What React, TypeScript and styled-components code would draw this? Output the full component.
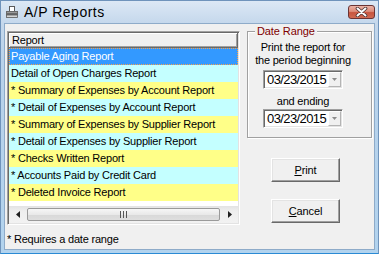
import React from "react";
import styled, { createGlobalStyle } from "styled-components";

const GlobalStyle = createGlobalStyle`
  html, body { margin: 0; padding: 0; background: #ffffff; }
  body { font-family: "Liberation Sans", Arial, sans-serif; color: #000; }
  * { box-sizing: border-box; }
`;

const Window = styled.div`
  width: 379px;
  height: 254px;
  display: flex;
  flex-direction: column;
  padding: 0 3px 3px;
  border: 1px solid #6f93bb;
  border-bottom-color: #2a8ad4;
  background: linear-gradient(to bottom, #dce8f5 0px, #c5d8ec 22px, #b9d2ea 60px, #b2d3ee 100%);
`;

const TitleBar = styled.div`
  height: 22px;
  flex: none;
  display: flex;
  align-items: center;
  padding-left: 2px;
`;

const TitleIcon = styled.svg`
  width: 12px;
  height: 12px;
  flex: none;
`;

const TitleText = styled.span`
  margin-left: 6px;
  flex: 1;
  font-size: 14px;
  letter-spacing: 0.5px;
  color: #000;
`;

const CloseButton = styled.div`
  align-self: flex-start;
  margin-top: 4px;
  width: 27px;
  height: 14px;
  border: 1px solid #6b3434;
  border-radius: 3px;
  background: linear-gradient(to bottom, #ebb3a6 0%, #dd8c7a 45%, #c8553f 55%, #d06a52 100%);
  display: flex;
  align-items: center;
  justify-content: center;
`;

const Client = styled.div`
  flex: 1;
  display: flex;
  gap: 7px;
  padding-left: 2px;
  background: #f0f0f0;
  border: 1px solid #8eabc9;
`;

const LeftColumn = styled.div`
  width: 233px;
  padding-top: 7px;
  display: flex;
  flex-direction: column;
`;

const RightColumn = styled.div`
  width: 125px;
  padding-top: 1px;
  display: flex;
  flex-direction: column;
`;

const ListBox = styled.div`
  height: 194px;
  display: flex;
  flex-direction: column;
  padding: 1px;
  border: 1px solid;
  border-color: #a0a0a0 #ffffff #ffffff #a0a0a0;
  box-shadow: inset 1px 1px 0 #696969, inset -1px -1px 0 #e3e3e3;
  background: #ffffff;
  font-size: 11px;
  letter-spacing: -0.2px;
`;

const Header = styled.div`
  height: 15px;
  flex: none;
  line-height: 14px;
  padding-left: 3px;
  background: #f0f0f0;
  border-right: 1px solid #696969;
  border-bottom: 1px solid #696969;
  box-shadow: inset 1px 1px 0 #ffffff, inset -1px -1px 0 #a0a0a0;
`;

const Rows = styled.div`
  flex: 1;
  background: #ffffff;
`;

const Row = styled.div<{ $tone: "cyan" | "yellow"; $selected?: boolean }>`
  height: 17px;
  line-height: 17px;
  padding-left: 2px;
  white-space: nowrap;
  overflow: hidden;
  background: ${(p) => (p.$selected ? "#3399ff" : p.$tone === "cyan" ? "#c4ffff" : "#ffff88")};
  color: ${(p) => (p.$selected ? "#ffffff" : "#000000")};
  outline: ${(p) => (p.$selected ? "1px dotted #f7a24a" : "none")};
  outline-offset: -1px;
`;

const ScrollBar = styled.div`
  height: 17px;
  flex: none;
  display: flex;
  background: linear-gradient(to bottom, #e3e3e3, #eeeeee 30%, #f2f2f2);
`;

const ScrollArrow = styled.div`
  width: 17px;
  flex: none;
  display: flex;
  align-items: center;
  justify-content: center;
`;

const ScrollThumb = styled.div`
  flex: 1;
  height: 13px;
  margin: 2px 1px 0;
  border: 1px solid #9a9a9a;
  border-radius: 2px;
  background: linear-gradient(to bottom, #f6f6f6, #e9e9e9 50%, #d8d8d8 51%, #dedede);
  display: flex;
  align-items: center;
  justify-content: center;
`;

const Note = styled.div`
  margin-top: 8px;
  font-size: 11px;
  line-height: 13px;
  letter-spacing: -0.2px;
`;

const GroupBox = styled.fieldset`
  margin: 0;
  padding: 0;
  min-width: 0;
  border: 1px solid #a0a0a0;
  box-shadow: inset 1px 1px 0 #ffffff, 1px 1px 0 #ffffff;
`;

const Legend = styled.legend`
  margin-left: 7px;
  padding: 0 2px;
  background: #f0f0f0;
  color: #800000;
  font-size: 11px;
  line-height: 13px;
  letter-spacing: -0.1px;
`;

const GroupContent = styled.div`
  display: flex;
  flex-direction: column;
  align-items: center;
  padding: 3px 23px 9px 10px;
  font-size: 11px;
  letter-spacing: -0.2px;
`;

const Caption = styled.div<{ $gap?: number }>`
  line-height: 13px;
  text-align: center;
  white-space: nowrap;
  margin-top: ${(p) => p.$gap ?? 0}px;
`;

const DateField = styled.div<{ $gap: number }>`
  width: 80px;
  height: 19px;
  margin-top: ${(p) => p.$gap}px;
  display: flex;
  align-items: stretch;
  padding: 1px;
  background: #ffffff;
  border: 1px solid;
  border-color: #a0a0a0 #ffffff #ffffff #a0a0a0;
  box-shadow: inset 1px 1px 0 #696969, inset -1px -1px 0 #e3e3e3;
`;

const DateText = styled.span`
  flex: 1;
  padding-left: 2px;
  font-size: 13px;
  line-height: 15px;
  letter-spacing: -0.6px;
`;

const DropButton = styled.div`
  width: 13px;
  flex: none;
  display: flex;
  align-items: center;
  justify-content: center;
  background: #f0f0f0;
  border: 1px solid;
  border-color: #ffffff #b4b4b4 #b4b4b4 #ffffff;
`;

const Button = styled.div<{ $gap: number }>`
  width: 69px;
  height: 24px;
  margin: ${(p) => p.$gap}px 0 0 24px;
  display: flex;
  align-items: center;
  justify-content: center;
  background: #f0f0f0;
  border: 1px solid;
  border-color: #ffffff #696969 #696969 #ffffff;
  box-shadow: inset -1px -1px 0 #a0a0a0, inset 1px 1px 0 #e3e3e3;
  font-size: 11px;
  letter-spacing: -0.1px;
  u { text-decoration: underline; text-underline-offset: 1px; }
`;

const reports: { label: string; tone: "cyan" | "yellow" }[] = [
  { label: "Payable Aging Report", tone: "cyan" },
  { label: "Detail of Open Charges Report", tone: "cyan" },
  { label: "* Summary of Expenses by Account Report", tone: "yellow" },
  { label: "* Detail of Expenses by Account Report", tone: "cyan" },
  { label: "* Summary of Expenses by Supplier Report", tone: "yellow" },
  { label: "* Detail of Expenses by Supplier Report", tone: "cyan" },
  { label: "* Checks Written Report", tone: "yellow" },
  { label: "* Accounts Paid by Credit Card", tone: "cyan" },
  { label: "* Deleted Invoice Report", tone: "yellow" },
];

const DropArrow = () => (
  <svg width="5" height="3" viewBox="0 0 5 3">
    <path d="M0 0 H5 L2.5 3 Z" fill="#8c8c8c" />
  </svg>
);

export default function App() {
  return (
    <>
      <GlobalStyle />
      <Window>
        <TitleBar>
          <TitleIcon viewBox="0 0 12 12">
            <rect x="3.5" y="0.5" width="5" height="5" fill="#ffffff" stroke="#5a5a5a" />
            <rect x="0" y="5" width="12" height="4" fill="#6a6a6a" />
            <rect x="1" y="6" width="10" height="1" fill="#9a9a9a" />
            <rect x="0.5" y="9" width="11" height="2.5" fill="#d4d4d4" stroke="#5a5a5a" strokeWidth="0.8" />
          </TitleIcon>
          <TitleText>A/P Reports</TitleText>
          <CloseButton>
            <svg width="13" height="10" viewBox="0 0 13 10">
              <path d="M2.5 1.5 L10.5 8.5 M10.5 1.5 L2.5 8.5" stroke="#4a3030" strokeWidth="3.6" strokeLinecap="round" />
              <path d="M2.5 1.5 L10.5 8.5 M10.5 1.5 L2.5 8.5" stroke="#ffffff" strokeWidth="2" strokeLinecap="round" />
            </svg>
          </CloseButton>
        </TitleBar>
        <Client>
          <LeftColumn>
            <ListBox>
              <Header>Report</Header>
              <Rows>
                {reports.map((r, i) => (
                  <Row key={r.label} $tone={r.tone} $selected={i === 0}>
                    {r.label}
                  </Row>
                ))}
              </Rows>
              <ScrollBar>
                <ScrollArrow>
                  <svg width="4" height="7" viewBox="0 0 4 7">
                    <path d="M4 0 V7 L0 3.5 Z" fill="#202020" />
                  </svg>
                </ScrollArrow>
                <ScrollThumb>
                  <svg width="7" height="7" viewBox="0 0 7 7">
                    <path d="M0.5 0 V7 M3.5 0 V7 M6.5 0 V7" stroke="#555555" strokeWidth="1" />
                  </svg>
                </ScrollThumb>
                <ScrollArrow>
                  <svg width="4" height="7" viewBox="0 0 4 7">
                    <path d="M0 0 V7 L4 3.5 Z" fill="#202020" />
                  </svg>
                </ScrollArrow>
              </ScrollBar>
            </ListBox>
            <Note>* Requires a date range</Note>
          </LeftColumn>
          <RightColumn>
            <GroupBox>
              <Legend>Date Range</Legend>
              <GroupContent>
                <Caption>Print the report for</Caption>
                <Caption>the period beginning</Caption>
                <DateField $gap={3}>
                  <DateText>03/23/2015</DateText>
                  <DropButton>
                    <DropArrow />
                  </DropButton>
                </DateField>
                <Caption $gap={6}>and ending</Caption>
                <DateField $gap={1}>
                  <DateText>03/23/2015</DateText>
                  <DropButton>
                    <DropArrow />
                  </DropButton>
                </DateField>
              </GroupContent>
            </GroupBox>
            <Button $gap={20}>
              <span>
                <u>P</u>rint
              </span>
            </Button>
            <Button $gap={17}>
              <span>
                <u>C</u>ancel
              </span>
            </Button>
          </RightColumn>
        </Client>
      </Window>
    </>
  );
}
